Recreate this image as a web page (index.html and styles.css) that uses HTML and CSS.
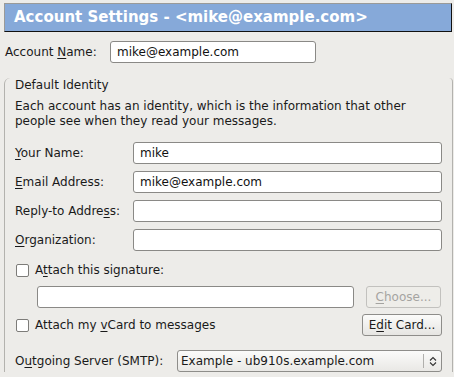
FILE: index.html
```html
<!DOCTYPE html>
<html lang="en">
<head>
  <meta charset="UTF-8" />
  <title>Account Settings</title>
  <link rel="stylesheet" href="styles.css">
</head>
<body>
  <div class="window">
    <div class="title-bar">Account Settings - &lt;mike@example.com&gt;</div>

    <div class="account-row">
      <span class="account-label">Account <u>N</u>ame:</span>
      <div class="field account-field">mike@example.com</div>
    </div>

    <div class="group">
      <div class="group-title">Default Identity</div>
      <p class="intro">Each account has an identity, which is the information that other people see when they read your messages.</p>

      <div class="form-grid">
        <span class="label"><u>Y</u>our Name:</span>
        <div class="field">mike</div>
        <span class="label"><u>E</u>mail Address:</span>
        <div class="field">mike@example.com</div>
        <span class="label">Reply-to Addre<u>s</u>s:</span>
        <div class="field"></div>
        <span class="label"><u>O</u>rganization:</span>
        <div class="field"></div>
      </div>

      <div class="check-row sig-check">
        <span class="checkbox"></span>
        <span>A<u>t</u>tach this signature:</span>
      </div>
      <div class="sig-row">
        <div class="field sig-field"></div>
        <div class="button disabled choose-btn"><u>C</u>hoose...</div>
      </div>

      <div class="vcard-row">
        <div class="check-row">
          <span class="checkbox"></span>
          <span>Attach my <u>v</u>Card to messages</span>
        </div>
        <div class="button edit-btn">E<u>d</u>it Card...</div>
      </div>

      <div class="smtp-row">
        <span class="smtp-label">O<u>u</u>tgoing Server (SMTP):</span>
        <div class="select">
          <span class="select-text">Example - ub910s.example.com</span>
          <span class="select-arrows">
            <svg width="8" height="11" viewBox="0 0 8 11">
              <path d="M1 4.5 L4 1.5 L7 4.5 M1 6.5 L4 9.5 L7 6.5" fill="none" stroke="#333" stroke-width="1.1"/>
            </svg>
          </span>
        </div>
      </div>
    </div>
  </div>
</body>
</html>
```
FILE: styles.css
```css
body {
  margin: 0;
  background-color: #edece9;
  font-family: "DejaVu Sans", "Liberation Sans", sans-serif;
  font-size: 12px;
  color: #1a1a1a;
}

u {
  text-underline-offset: 2px;
}

.window {
  padding: 3px 2px 0 4px;
}

.title-bar {
  height: 27px;
  line-height: 27px;
  padding-left: 9px;
  background-color: #86a9d9;
  border: 1px solid #111;
  border-top-color: #9a9a98;
  border-left-color: #9a9a98;
  color: #fff;
  font-weight: bold;
  font-size: 15px;
}

.account-row {
  display: flex;
  align-items: center;
  margin-top: 9px;
  margin-left: 1px;
}

.account-label {
  width: 105px;
}

.field {
  box-sizing: border-box;
  height: 22px;
  line-height: 20px;
  padding: 0 6px;
  background: #fff;
  border: 1px solid #8a8986;
  border-radius: 3px;
  color: #111;
}

.account-field {
  width: 206px;
}

.group {
  margin-top: 23px;
  border: 1px solid #b3b2ae;
  border-top: none;
  border-bottom: none;
  border-radius: 6px 4px 0 0;
  padding: 0 10px 0 10px;
  width: 427px;
}

.group-title {
  margin-top: -8px;
  line-height: 14px;
}

.intro {
  margin: 7px 0 0;
  line-height: 15px;
}

.form-grid {
  display: grid;
  grid-template-columns: 118px 309px;
  row-gap: 7px;
  align-items: center;
  margin-top: 13px;
}

.check-row {
  display: flex;
  align-items: center;
  gap: 6px;
}

.sig-check {
  margin-top: 12px;
}

.checkbox {
  box-sizing: border-box;
  width: 13px;
  height: 13px;
  margin-left: 1px;
  background: #fff;
  border: 1px solid #7d7c79;
  border-radius: 2px;
}

.sig-row {
  display: flex;
  align-items: center;
  gap: 12px;
  margin-top: 9px;
  padding-left: 22px;
}

.sig-field {
  width: 317px;
}

.button {
  box-sizing: border-box;
  height: 22px;
  line-height: 20px;
  padding: 0 5px;
  border: 1px solid #8e8d8a;
  border-radius: 3px;
  background: linear-gradient(#fbfbfa, #e6e5e2);
  text-align: center;
}

.button.disabled {
  border-color: #c2c1be;
  background: #eeede9;
  color: #a5a4a1;
}

.choose-btn {
  width: 75px;
}

.vcard-row {
  display: flex;
  align-items: center;
  justify-content: space-between;
  margin-top: 6px;
}

.edit-btn {
  width: 80px;
}

.smtp-row {
  display: flex;
  align-items: center;
  margin-top: 14px;
}

.smtp-label {
  width: 162px;
}

.select {
  box-sizing: border-box;
  display: flex;
  align-items: center;
  width: 265px;
  height: 22px;
  padding-left: 3px;
  border: 1px solid #8e8d8a;
  border-radius: 3px;
  background: linear-gradient(#fbfbfa, #e9e8e5);
}

.select-text {
  flex: 1;
}

.select-arrows {
  display: flex;
  align-items: center;
  justify-content: center;
  width: 17px;
  height: 14px;
  border-left: 1px solid #b0afac;
}
```
